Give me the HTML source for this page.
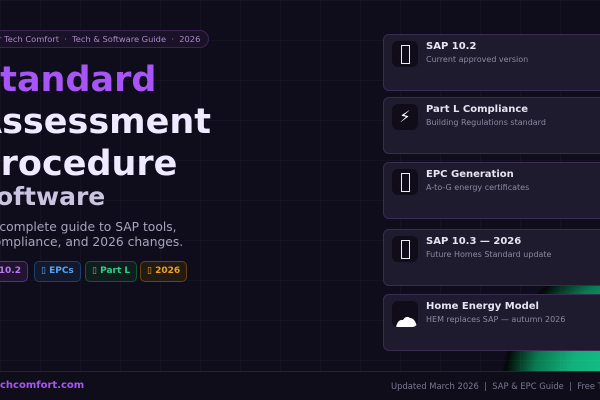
<!DOCTYPE html>
<html style="width:600px;height:400px;overflow:hidden"><head><meta charset="utf-8"><style>
*{margin:0;padding:0;box-sizing:border-box}
body{width:600px;height:400px;overflow:hidden;background:#0f0d1c;font-family:"DejaVu Sans","Liberation Sans",sans-serif;position:relative;}
#w{position:absolute;left:0;top:0;width:600px;height:400px;overflow:hidden;
background-image:linear-gradient(rgba(255,255,255,0.025) 1px,transparent 1px),linear-gradient(90deg,rgba(255,255,255,0.025) 1px,transparent 1px),radial-gradient(circle 150px at 650px 390px,#14d492 0%,#10b07a 55%,#0a7a52 78%,#05281b 92%,#030806 97%,rgba(15,13,28,0) 100%);background-size:40px 40px,40px 40px,600px 400px;background-repeat:repeat,repeat,no-repeat;}
.pill{position:absolute;left:-20px;top:30px;height:18px;padding:0 8px 0 12px;border:1px solid #3a2650;border-radius:9px;background:#1a1228;color:#a78bc8;font-size:8.3px;line-height:16px;white-space:nowrap}
.h{position:absolute;left:-25px;font-weight:bold;font-size:35px;white-space:nowrap;color:#efeaff;line-height:42px}
.sub{position:absolute;left:-13px;top:220px;color:#a9a3bd;font-size:12.3px;line-height:15px;white-space:nowrap}
.tag{position:absolute;top:261px;height:21px;border-radius:5px;font-size:9px;font-weight:bold;line-height:19px;padding:0 6px;white-space:nowrap}
.card{position:absolute;left:383px;width:230px;height:57px;border:1px solid #3a2d55;border-radius:6px;background:#1e1b2e}
.ic{position:absolute;left:8px;top:6px;width:26px;height:26px;border-radius:6px;background:#110c1a;color:#fff;font-size:16px;text-align:center;line-height:26px;overflow:hidden}
.ic .b{display:inline-block;width:9px;height:19px;border:1.5px solid #eee;margin-top:4px}
.t{position:absolute;left:42px;top:6px;color:#e8e4f4;font-weight:bold;font-size:10px}
.s{position:absolute;left:42px;top:20px;color:#8d88a2;font-size:8px;white-space:nowrap}
.foot{position:absolute;left:0;top:371px;width:600px;height:29px;background:#100d1a;border-top:1px solid #2c2040;overflow:hidden}
</style></head><body><div id="w">
<div class="pill">or Tech Comfort &nbsp;·&nbsp; Tech &amp; Software Guide &nbsp;·&nbsp; 2026</div>
<div class="h" style="top:59px;color:#a855f7">Standard</div>
<div class="h" style="top:101px">Assessment</div>
<div class="h" style="top:143px">Procedure</div>
<div class="h" style="top:176px;font-size:25px;color:#cbc4e0;left:-22px">Software</div>
<div class="sub">A complete guide to SAP tools,<br>compliance, and 2026 changes.</div>
<div class="tag" style="left:-30px;width:58px;border:1px solid #5b2d86;background:#221332;color:#b77cf0;text-align:right">10.2</div>
<div class="tag" style="left:34px;border:1px solid #1f3f66;background:#12192c;color:#5aa3f0">▯ EPCs</div>
<div class="tag" style="left:85px;border:1px solid #12553d;background:#0f1e1d;color:#2fcf8a">▯ Part L</div>
<div class="tag" style="left:140px;border:1px solid #6a4310;background:#231a12;color:#f0a21e">▯ 2026</div>

<div class="card" style="top:34px"><div class="ic"><span class="b"></span></div><div class="t">SAP 10.2</div><div class="s">Current approved version</div></div>
<div class="card" style="top:97px"><div class="ic">⚡</div><div class="t">Part L Compliance</div><div class="s">Building Regulations standard</div></div>
<div class="card" style="top:162px"><div class="ic"><span class="b"></span></div><div class="t">EPC Generation</div><div class="s">A-to-G energy certificates</div></div>
<div class="card" style="top:229px"><div class="ic"><span class="b"></span></div><div class="t">SAP 10.3 — 2026</div><div class="s">Future Homes Standard update</div></div>
<div class="card" style="top:294px"><div class="ic"><svg width="26" height="26" viewBox="0 0 26 26" style="display:block"><path d="M4 26 Q6 18 11 19 Q14 14 18 17 Q23 17 25 26Z" fill="#fff"/></svg></div><div class="t">Home Energy Model</div><div class="s">HEM replaces SAP — autumn 2026</div></div>

<div class="foot">
<div style="position:absolute;left:0;top:8px;color:#a855f7;font-weight:bold;font-size:10px">chcomfort.com</div>
<div style="position:absolute;left:391px;top:9px;color:#7d7792;font-size:8.4px;white-space:nowrap">Updated March 2026 &nbsp;| &nbsp;SAP &amp; EPC Guide &nbsp;| &nbsp;Free Tools</div>
</div>
</div></body></html>
